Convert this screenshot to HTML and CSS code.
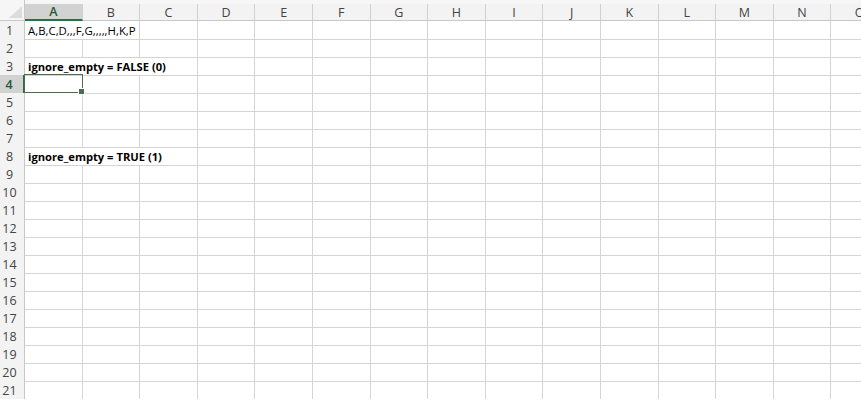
FILE: index.html
```
<!DOCTYPE html>
<html lang="en">
<head>
    <meta charset="UTF-8">
    <title>TEXTJOIN ignore_empty</title>
    <link rel="stylesheet" href="styles.css">
</head>
<body>
<div class="sheet">
    <div class="row head">
        <div class="corner"><span class="tri"></span></div>
        <div class="col sel">A</div><div class="col">B</div><div class="col">C</div><div class="col">D</div><div class="col">E</div>
        <div class="col">F</div><div class="col">G</div><div class="col">H</div><div class="col">I</div><div class="col">J</div>
        <div class="col">K</div><div class="col">L</div><div class="col">M</div><div class="col">N</div><div class="col">O</div>
    </div>

    <div class="row"><div class="num">1</div><div class="cell span2">A,B,C,D,,,F,G,,,,,H,K,P</div><div class="cell"></div><div class="cell"></div><div class="cell"></div><div class="cell"></div><div class="cell"></div><div class="cell"></div><div class="cell"></div><div class="cell"></div><div class="cell"></div><div class="cell"></div><div class="cell"></div><div class="cell"></div><div class="cell"></div></div>
    <div class="row"><div class="num">2</div><div class="cell"></div><div class="cell"></div><div class="cell"></div><div class="cell"></div><div class="cell"></div><div class="cell"></div><div class="cell"></div><div class="cell"></div><div class="cell"></div><div class="cell"></div><div class="cell"></div><div class="cell"></div><div class="cell"></div><div class="cell"></div><div class="cell"></div></div>
    <div class="row"><div class="num">3</div><div class="cell span3 bold">ignore_empty = FALSE (0)</div><div class="cell"></div><div class="cell"></div><div class="cell"></div><div class="cell"></div><div class="cell"></div><div class="cell"></div><div class="cell"></div><div class="cell"></div><div class="cell"></div><div class="cell"></div><div class="cell"></div><div class="cell"></div></div>
    <div class="row"><div class="num sel">4</div><div class="cell active"><span class="handle"></span></div><div class="cell"></div><div class="cell"></div><div class="cell"></div><div class="cell"></div><div class="cell"></div><div class="cell"></div><div class="cell"></div><div class="cell"></div><div class="cell"></div><div class="cell"></div><div class="cell"></div><div class="cell"></div><div class="cell"></div><div class="cell"></div></div>
    <div class="row"><div class="num">5</div><div class="cell"></div><div class="cell"></div><div class="cell"></div><div class="cell"></div><div class="cell"></div><div class="cell"></div><div class="cell"></div><div class="cell"></div><div class="cell"></div><div class="cell"></div><div class="cell"></div><div class="cell"></div><div class="cell"></div><div class="cell"></div><div class="cell"></div></div>
    <div class="row"><div class="num">6</div><div class="cell"></div><div class="cell"></div><div class="cell"></div><div class="cell"></div><div class="cell"></div><div class="cell"></div><div class="cell"></div><div class="cell"></div><div class="cell"></div><div class="cell"></div><div class="cell"></div><div class="cell"></div><div class="cell"></div><div class="cell"></div><div class="cell"></div></div>
    <div class="row"><div class="num">7</div><div class="cell"></div><div class="cell"></div><div class="cell"></div><div class="cell"></div><div class="cell"></div><div class="cell"></div><div class="cell"></div><div class="cell"></div><div class="cell"></div><div class="cell"></div><div class="cell"></div><div class="cell"></div><div class="cell"></div><div class="cell"></div><div class="cell"></div></div>
    <div class="row"><div class="num">8</div><div class="cell span3 bold">ignore_empty = TRUE (1)</div><div class="cell"></div><div class="cell"></div><div class="cell"></div><div class="cell"></div><div class="cell"></div><div class="cell"></div><div class="cell"></div><div class="cell"></div><div class="cell"></div><div class="cell"></div><div class="cell"></div><div class="cell"></div></div>
    <div class="row"><div class="num">9</div><div class="cell"></div><div class="cell"></div><div class="cell"></div><div class="cell"></div><div class="cell"></div><div class="cell"></div><div class="cell"></div><div class="cell"></div><div class="cell"></div><div class="cell"></div><div class="cell"></div><div class="cell"></div><div class="cell"></div><div class="cell"></div><div class="cell"></div></div>
    <div class="row"><div class="num">10</div><div class="cell"></div><div class="cell"></div><div class="cell"></div><div class="cell"></div><div class="cell"></div><div class="cell"></div><div class="cell"></div><div class="cell"></div><div class="cell"></div><div class="cell"></div><div class="cell"></div><div class="cell"></div><div class="cell"></div><div class="cell"></div><div class="cell"></div></div>
    <div class="row"><div class="num">11</div><div class="cell"></div><div class="cell"></div><div class="cell"></div><div class="cell"></div><div class="cell"></div><div class="cell"></div><div class="cell"></div><div class="cell"></div><div class="cell"></div><div class="cell"></div><div class="cell"></div><div class="cell"></div><div class="cell"></div><div class="cell"></div><div class="cell"></div></div>
    <div class="row"><div class="num">12</div><div class="cell"></div><div class="cell"></div><div class="cell"></div><div class="cell"></div><div class="cell"></div><div class="cell"></div><div class="cell"></div><div class="cell"></div><div class="cell"></div><div class="cell"></div><div class="cell"></div><div class="cell"></div><div class="cell"></div><div class="cell"></div><div class="cell"></div></div>
    <div class="row"><div class="num">13</div><div class="cell"></div><div class="cell"></div><div class="cell"></div><div class="cell"></div><div class="cell"></div><div class="cell"></div><div class="cell"></div><div class="cell"></div><div class="cell"></div><div class="cell"></div><div class="cell"></div><div class="cell"></div><div class="cell"></div><div class="cell"></div><div class="cell"></div></div>
    <div class="row"><div class="num">14</div><div class="cell"></div><div class="cell"></div><div class="cell"></div><div class="cell"></div><div class="cell"></div><div class="cell"></div><div class="cell"></div><div class="cell"></div><div class="cell"></div><div class="cell"></div><div class="cell"></div><div class="cell"></div><div class="cell"></div><div class="cell"></div><div class="cell"></div></div>
    <div class="row"><div class="num">15</div><div class="cell"></div><div class="cell"></div><div class="cell"></div><div class="cell"></div><div class="cell"></div><div class="cell"></div><div class="cell"></div><div class="cell"></div><div class="cell"></div><div class="cell"></div><div class="cell"></div><div class="cell"></div><div class="cell"></div><div class="cell"></div><div class="cell"></div></div>
    <div class="row"><div class="num">16</div><div class="cell"></div><div class="cell"></div><div class="cell"></div><div class="cell"></div><div class="cell"></div><div class="cell"></div><div class="cell"></div><div class="cell"></div><div class="cell"></div><div class="cell"></div><div class="cell"></div><div class="cell"></div><div class="cell"></div><div class="cell"></div><div class="cell"></div></div>
    <div class="row"><div class="num">17</div><div class="cell"></div><div class="cell"></div><div class="cell"></div><div class="cell"></div><div class="cell"></div><div class="cell"></div><div class="cell"></div><div class="cell"></div><div class="cell"></div><div class="cell"></div><div class="cell"></div><div class="cell"></div><div class="cell"></div><div class="cell"></div><div class="cell"></div></div>
    <div class="row"><div class="num">18</div><div class="cell"></div><div class="cell"></div><div class="cell"></div><div class="cell"></div><div class="cell"></div><div class="cell"></div><div class="cell"></div><div class="cell"></div><div class="cell"></div><div class="cell"></div><div class="cell"></div><div class="cell"></div><div class="cell"></div><div class="cell"></div><div class="cell"></div></div>
    <div class="row"><div class="num">19</div><div class="cell"></div><div class="cell"></div><div class="cell"></div><div class="cell"></div><div class="cell"></div><div class="cell"></div><div class="cell"></div><div class="cell"></div><div class="cell"></div><div class="cell"></div><div class="cell"></div><div class="cell"></div><div class="cell"></div><div class="cell"></div><div class="cell"></div></div>
    <div class="row"><div class="num">20</div><div class="cell"></div><div class="cell"></div><div class="cell"></div><div class="cell"></div><div class="cell"></div><div class="cell"></div><div class="cell"></div><div class="cell"></div><div class="cell"></div><div class="cell"></div><div class="cell"></div><div class="cell"></div><div class="cell"></div><div class="cell"></div><div class="cell"></div></div>
    <div class="row"><div class="num">21</div><div class="cell"></div><div class="cell"></div><div class="cell"></div><div class="cell"></div><div class="cell"></div><div class="cell"></div><div class="cell"></div><div class="cell"></div><div class="cell"></div><div class="cell"></div><div class="cell"></div><div class="cell"></div><div class="cell"></div><div class="cell"></div><div class="cell"></div></div>
</div>
</body>
</html>
```

FILE: styles.css
```
html, body {
    margin: 0;
    background: #fff;
    overflow: hidden;
}

.sheet {
    font-family: "Open Sans", "Liberation Sans", sans-serif;
    font-size: 11.4px;
    color: #000;
}

.row {
    display: grid;
    grid-template-columns: 25px repeat(15, 57.6px);
    height: 18px;
}

/* column headers */
.head {
    height: 21px;
    background: #f6f6f6;
}

.corner {
    position: relative;
    border-right: 1px solid #c8c8c8;
    border-bottom: 1px solid #c8c8c8;
    box-sizing: border-box;
}

.corner .tri {
    position: absolute;
    right: 2px;
    bottom: 2px;
    width: 0;
    height: 0;
    border-left: 13px solid transparent;
    border-bottom: 12px solid #dcdcdc;
}

.col {
    margin-top: 4px;
    padding-top: 2px;
    background: #f3f3f3;
    border-right: 1px solid #d0d0d0;
    border-bottom: 1px solid #c8c8c8;
    box-sizing: border-box;
    display: flex;
    align-items: center;
    justify-content: center;
    color: #444;
    font-size: 12.5px;
    line-height: 1;
}

.col.sel {
    background: #d2d2d2;
    border-bottom: 2px solid #217346;
    color: #1e5a36;
    font-weight: 600;
}

/* row numbers */
.num {
    background: #f3f3f3;
    border-right: 1px solid #c8c8c8;
    border-bottom: 1px solid #d6d6d6;
    box-sizing: border-box;
    display: flex;
    align-items: center;
    justify-content: center;
    padding: 1px 5px 0 0;
    color: #444;
    font-size: 12.5px;
}

.num.sel {
    background: #d2d2d2;
    border-right: 2px solid #217346;
    color: #1e5a36;
    font-weight: 600;
}

.cell {
    border-right: 1px solid #d4d4d4;
    border-bottom: 1px solid #d4d4d4;
    box-sizing: border-box;
    padding: 1px 3px 0;
    line-height: 17px;
    white-space: nowrap;
}

.span2 {
    grid-column: span 2;
}

.span3 {
    grid-column: span 3;
}

.bold {
    font-weight: bold;
    font-size: 11.2px;
}

.active {
    position: relative;
    border: 1px solid #4f6b4d;
    margin: -1px 0 0 -1px;
    width: calc(100% + 1px);
    height: 19px;
}

.handle {
    position: absolute;
    right: -3px;
    bottom: -3px;
    width: 5px;
    height: 5px;
    background: #4f6b4d;
    border: 1px solid #fff;
}
```
